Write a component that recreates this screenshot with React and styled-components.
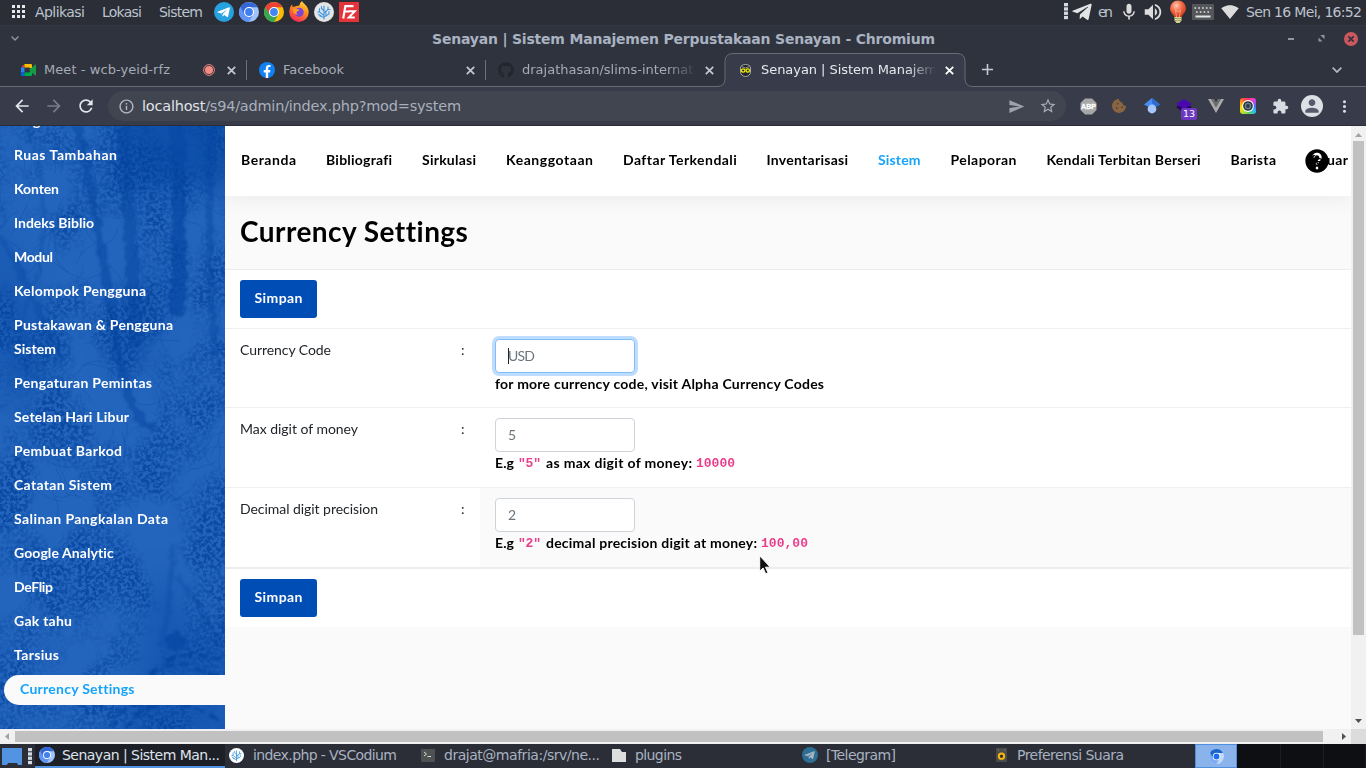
import React, { useLayoutEffect, useRef } from "react";
import styled, { createGlobalStyle, css } from "styled-components";
import {
  MdArrowBack, MdArrowForward, MdRefresh, MdInfoOutline, MdSend, MdStarBorder, MdExtension,
  MdPerson, MdMoreVert, MdMic, MdVolumeUp, MdSignalWifi4Bar, MdHelp, MdAdd,
} from "react-icons/md";
import { FaGithub, FaTelegramPlane, FaCookieBite } from "react-icons/fa";

const Global = createGlobalStyle`
  * { box-sizing: border-box; }
  body { margin: 0; overflow: hidden; background: #2b2e37; }
`;

const ui = `"DejaVu Sans", sans-serif`;
const round = `Lato, "Open Sans", sans-serif`;

/* ---------- text that fills a given width through its letter spacing ---------- */

const FitBox = styled.span`
  display: inline-block;
  flex: none;
  width: ${(p) => p.$w}px;
  margin-left: ${(p) => p.$ml || 0}px;
  white-space: nowrap;
`;

function Fit({ w, ml, children, className }) {
  const inner = useRef(null);
  useLayoutEffect(() => {
    const el = inner.current;
    el.style.letterSpacing = "0px";
    const n = el.textContent.length;
    if (n > 1) el.style.letterSpacing = `${(w - el.getBoundingClientRect().width) / (n - 1)}px`;
  }, [w, children]);
  return (
    <FitBox $w={w} $ml={ml} className={className}>
      <span ref={inner}>{children}</span>
    </FitBox>
  );
}

/* ---------- shared ---------- */

const Screen = styled.div`
  width: 1366px;
  height: 768px;
  display: flex;
  flex-direction: column;
  overflow: hidden;
  font-family: ${ui};
`;

const Slot = styled.span`
  display: flex;
  flex: none;
  align-items: center;
  justify-content: center;
  width: ${(p) => p.$w}px;
  height: 100%;
  margin-left: ${(p) => p.$ml || 0}px;
  color: ${(p) => p.$c || "#d8dbe2"};
  font-size: ${(p) => p.$s || 16}px;
  position: relative;
  svg { flex: none; display: block; }
`;

/* ---------- icons ---------- */

const Telegram = ({ size = 20, bg = "#27a2e0", fg = "#fff" }) => (
  <svg width={size} height={size} viewBox="0 0 20 20">
    <circle cx="10" cy="10" r="10" fill={bg} />
    <path d="M3.6 9.8 15 5.2c.6-.2 1 .1.9.8l-1.8 8.6c-.1.6-.6.7-1 .4l-2.8-2-1.400 1.300c-.3.3-.6.1-.7-.2l-.6-2.500-3.900-1.100c-.6-.2-.6-.5-.1-.7z" fill={fg} />
    <path d="M7.700 11.500 13 7.500 8.900 12l-.6 2.300z" fill={bg} />
  </svg>
);

const Chrome = ({ size = 20, a = "#ea4335", b = "#fbbc05", c = "#34a853", core = "#4285f4" }) => (
  <svg width={size} height={size} viewBox="0 0 20 20">
    <circle cx="10" cy="10" r="10" fill={b} />
    <path d="M1.340 5A10 10 0 0 0 10 20l4.200-7.500H6.100z" fill={c} />
    <path d="M1.340 5A10 10 0 0 1 18.660 5.300H10L5.700 12.500z" fill={a} />
    <circle cx="10" cy="10" r="5" fill="#fff" />
    <circle cx="10" cy="10" r="3.900" fill={core} />
  </svg>
);

const Chromium = ({ size }) => <Chrome size={size} a="#3367d6" b="#a1c2fa" c="#5f93f5" core="#3f7ff0" />;

const Firefox = () => (
  <svg width="20" height="21" viewBox="0 0 20 21">
    <defs>
      <linearGradient id="fx" x1="0.8" y1="0" x2="0.3" y2="1">
        <stop offset="0" stopColor="#ffe03d" />
        <stop offset="0.45" stopColor="#ff8a1f" />
        <stop offset="1" stopColor="#f5255c" />
      </linearGradient>
    </defs>
    <path d="M13 0c1 2.500 6.700 5 6.700 11.200A9.700 9.700 0 0 1 .3 11.200C.3 7.500 1.500 5 3 3.500L3.600 6 6 5.400c1-.3 3-1 4.300-.6C10.500 3 11.600 1 13 0z" fill="url(#fx)" />
    <circle cx="10.200" cy="11.200" r="4.500" fill="#7b45d8" />
    <path d="M4 7.500c2-.8 4 .5 6.500 1.200-.3 1.200-2 1-2.800 2.200-.6 1 .2 2 1.300 2.500-3 .8-5.500-2-5-5.900z" fill="#ff9b22" />
  </svg>
);

const Codium = ({ size = 20, ring = "#e3e4e6" }) => (
  <svg width={size} height={size} viewBox="0 0 20 20">
    <circle cx="10" cy="10" r="10" fill={ring} />
    <g fill="none" stroke="#3f97e0" strokeWidth="1.100" strokeLinecap="round">
      <path d="M10 17V4M10 13.500 5.500 10V6.500M10 11l4-3.500V5M10 9 7.500 6.500V4.500M10 15l5-3V9.500M5.500 10H3.800M14 7.500h2M10 15.500 6 14M12 13l-.2-3.500M7 13.800 4.500 12.500" />
    </g>
  </svg>
);

const Filezilla = () => (
  <svg width="20" height="20" viewBox="0 0 20 20">
    <rect width="20" height="20" fill="#e5333a" />
    <g fill="none" stroke="#fff">
      <path d="M4.200 16.500 6.400 4.100H14.500M5.500 9.500h5" strokeWidth="2.200" />
      <path d="M9.500 9.300h6.300l-6 6.200h6" strokeWidth="2" />
    </g>
  </svg>
);

const Grid = () => (
  <svg width="13" height="13" viewBox="0 0 13 13" fill="#e6e8ec">
    {[0, 5, 10].map((y) => [0, 5, 10].map((x) => <rect key={x + "-" + y} x={x} y={y} width="3" height="3" />))}
  </svg>
);

const Dots = () => (
  <svg width="4" height="17" viewBox="0 0 4 17" fill="#d3dae3">
    {[0, 4.300, 8.600, 12.900].map((y) => <rect key={y} y={y} width="4" height="3.300" />)}
  </svg>
);

const Bulb = () => (
  <svg width="18" height="24" viewBox="0 0 18 24">
    <defs>
      <radialGradient id="bulb" cx="0.4" cy="0.3" r="0.7">
        <stop offset="0" stopColor="#ffc9b4" />
        <stop offset="0.5" stopColor="#f26a44" />
        <stop offset="1" stopColor="#c8381b" />
      </radialGradient>
    </defs>
    <path d="M9 .5a8 8 0 0 1 8 8c0 4-4 6-4.500 9h-7C5 14.500 1 12.500 1 8.500a8 8 0 0 1 8-8z" fill="url(#bulb)" />
    <path d="M7.500 17 6.500 10l2.500 2 2.500-2-1 7" fill="none" stroke="#f9b08a" strokeWidth=".8" />
    <path d="M5.500 17h7v3.500l-2 2.500h-3l-2-2.500z" fill="#d9d79a" />
    <path d="M5.500 18.500h7M5.500 20.500h7" stroke="#8f8c58" strokeWidth=".7" />
  </svg>
);

const Keyboard = () => (
  <svg width="22" height="16" viewBox="0 0 22 16">
    <rect width="22" height="16" fill="#54565a" />
    <g stroke="#e4e5e6" strokeWidth="1.600">
      <path d="M2.500 4h17" strokeDasharray="1.600 2.200" />
      <path d="M4 8h14" strokeDasharray="1.600 2.200" />
      <path d="M3.500 12.500h15" strokeWidth="2" />
    </g>
  </svg>
);

const Meet = () => (
  <svg width="15" height="12" viewBox="0 0 15 12">
    <path d="M0 3.500 3.500 0v3.500z" fill="#ea4335" />
    <path d="M3.500 0H10a1 1 0 0 1 1 1v4L8 3.500H3.500z" fill="#fbbc04" />
    <path d="M0 3.500h3.500v5H0z" fill="#2684fc" />
    <path d="M0 8.500h3.500V12H1a1 1 0 0 1-1-1z" fill="#0066da" />
    <path d="M3.500 8.500H8L11 6v5a1 1 0 0 1-1 1H3.500z" fill="#00ac47" />
    <path d="M8 6 14 .8c.5-.4 1-.1 1 .5v9.400c0 .6-.5.9-1 .5z" fill="#189a45" />
  </svg>
);

const Recording = () => (
  <svg width="12" height="12" viewBox="0 0 12 12">
    <circle cx="6" cy="6" r="5.400" fill="none" stroke="#ee837c" strokeWidth="1" />
    <circle cx="6" cy="6" r="4" fill="#f28b82" />
  </svg>
);

const Cross = () => (
  <svg width="9" height="9" viewBox="0 0 9 9">
    <path d="M.8.8l7.400 7.400M8.200.8.8 8.200" stroke="currentColor" strokeWidth="1.800" />
  </svg>
);

const Chevron = ({ size }) => (
  <svg width={size} height={size * 0.6} viewBox="0 0 10 6">
    <path d="M.7.7 5 5 9.300.7" fill="none" stroke="currentColor" strokeWidth="1.700" />
  </svg>
);

const Facebook = () => (
  <svg width="16" height="16" viewBox="0 0 16 16">
    <circle cx="8" cy="8" r="8" fill="#1080f5" />
    <path d="M6.800 16v-5.600H4.700V8h2.100V6.300c0-2.100 1.200-3.300 3.100-3.300.8 0 1.600.1 1.600.1v2h-1c-1 0-1.300.6-1.300 1.300V8h2.200l-.4 2.400H9.200V16z" fill="#fff" />
  </svg>
);

const SenayanMark = () => (
  <svg width="13" height="13" viewBox="0 0 13 13">
    <path d="M1.500 4C1.500 1.500 4 .5 6.500 .5s5 1 5 3.500v4c0 2.500-2.500 4.500-5 4.500s-5-2-5-4.500z" fill="#23262a" stroke="#a6a9a6" />
    <path d="M2.500 2.500 6.500 4l4-1.500" fill="none" stroke="#8f9290" />
    <circle cx="4.200" cy="6.500" r="1.700" fill="none" stroke="#f4ec00" strokeWidth="1.300" />
    <circle cx="8.800" cy="6.500" r="1.700" fill="none" stroke="#f4ec00" strokeWidth="1.300" />
  </svg>
);

const Abp = () => (
  <svg width="17" height="17" viewBox="0 0 17 17">
    <path d="M5 .5h7L16.500 5v7L12 16.500H5L.5 12V5z" fill="#a7a7a7" />
    <text x="8.500" y="11.300" textAnchor="middle" fontFamily="Liberation Sans, sans-serif" fontWeight="700" fontSize="8" fill="#fff" stroke="#fff" strokeWidth=".3" textLength="15" lengthAdjust="spacingAndGlyphs">ABP</text>
  </svg>
);

const Scholar = () => (
  <svg width="16" height="16" viewBox="0 0 16 16">
    <path d="M8 0 0 6.500 4.500 9h7L16 6.500z" fill="#4a8af4" />
    <path d="M8 0l8 6.500L12 9 8 5z" fill="#2f6bd0" />
    <circle cx="8" cy="11" r="4.400" fill="#a6c6fa" />
  </svg>
);

const PurpleBox = () => (
  <svg width="16" height="14" viewBox="0 0 16 14">
    <path d="M0 8l8-4 8 4-8 6z" fill="#26065f" />
    <path d="M8 0l8 5-8 5-8-5z" fill="#4a08b0" />
  </svg>
);

const Vue = () => (
  <svg width="16" height="14" viewBox="0 0 16 14">
    <path d="M0 0h3.200L8 8.300 12.800 0H16L8 14z" fill="#a9aaa9" />
    <path d="M3.200 0H6l2 3.500L10 0h2.800L8 8.300z" fill="#6d6f72" />
  </svg>
);

const Rainbow = styled.span`
  display: flex;
  align-items: center;
  justify-content: center;
  width: 16px;
  height: 16px;
  border-radius: 3px;
  background: conic-gradient(#ff2f6b, #ff3fae 8%, #e63bdc 12%, #4a6bff 25%, #25c4ef 36%, #58d35a 48%, #b5e02c 60%, #ffe000 70%, #ffb300 80%, #ff5a3c 90%, #ff2f6b);
`;

const Camera = () => (
  <Rainbow>
    <svg width="12" height="12" viewBox="0 0 12 12">
      <circle cx="6" cy="6" r="5.900" fill="#fff" />
      <circle cx="6" cy="6" r="4.100" fill="#69808d" stroke="#29343b" strokeWidth="1.500" />
      <circle cx="6" cy="6" r="1.900" fill="#2c3b45" />
    </svg>
  </Rainbow>
);

const CloseRed = () => (
  <svg width="14" height="14" viewBox="0 0 14 14">
    <circle cx="7" cy="7" r="7" fill="#cc575d" />
    <path d="M4.300 4.300 9.700 9.700M9.700 4.300 4.300 9.700" stroke="#2f333d" strokeWidth="1.700" />
  </svg>
);

const Restore = () => (
  <svg width="7" height="7" viewBox="0 0 7 7" fill="#90959f">
    <path d="M2.300 0H6.500v4.200zM.5 2.500v4h4z" />
  </svg>
);

const Terminal = () => (
  <svg width="14" height="13" viewBox="0 0 14 13">
    <rect width="14" height="13" rx="1" fill="#505153" />
    <path d="M3 3l2.500 2L3 7M6.500 7.500H10" fill="none" stroke="#dadada" />
  </svg>
);

const Folder = () => (
  <svg width="14" height="13" viewBox="0 0 14 13">
    <path d="M0 0h8l2 3h4v10H0z" fill="#dedede" />
  </svg>
);

const Speaker = () => (
  <svg width="11" height="14" viewBox="0 0 11 14">
    <rect width="11" height="14" rx="1" fill="#4b4b4b" />
    <circle cx="2.500" cy="2" r=".7" fill="#777" /><circle cx="8.500" cy="2" r=".7" fill="#777" />
    <circle cx="5.500" cy="8.200" r="2.700" fill="#333" stroke="#fcb90d" strokeWidth="1.900" />
  </svg>
);

const Desktop = () => (
  <svg width="20" height="17" viewBox="0 0 20 17">
    <path d="M0 0h20v17h-4l-1-2H6l-1 2H0z" fill="#5294e2" />
  </svg>
);

const Pointer = styled.svg`
  position: absolute;
  left: 534px;
  top: 429px;
`;

/* ---------- desktop panel ---------- */

const Panel = styled.div`
  flex: none;
  display: flex;
  align-items: center;
  height: 26px;
  padding-bottom: 2px;
  background: #2b2e37;
  border-bottom: 1px solid #353842;
  color: #bcc3ce;
  font-size: 14px;
`;

const Spring = styled.span`flex: 1;`;

const TitleBar = styled.div`
  flex: none;
  display: flex;
  align-items: center;
  height: 27px;
  padding-bottom: 2px;
  background: #2f333d;
  color: #a9b2c1;
  font-size: 14px;
  font-weight: 700;
`;

const Minimize = styled.span`
  width: 6px;
  height: 2px;
  background: #90959f;
`;

/* ---------- browser chrome ---------- */

const TabStrip = styled.div`
  flex: none;
  display: flex;
  height: 34px;
  padding-left: 8px;
  background: #2f333d;
  border-bottom: 1px solid #686b76;
`;

const TabBox = styled.div`
  position: relative;
  display: flex;
  align-items: center;
  width: ${(p) => (p.$active ? 240 : 239)}px;
  height: 34px;
  padding-left: 11px;
  color: ${(p) => (p.$active ? "#e6e8ed" : "#a5abb7")};
  font-size: 13px;
  ${(p) => p.$divider && css`
    &::after { content: ""; position: absolute; right: 0; top: 7px; width: 1px; height: 20px; background: #6d707b; }
  `}
`;

const TabText = styled.span`
  flex: 1;
  min-width: 0;
  margin-left: 7px;
  margin-right: -2px;
  padding-bottom: 2px;
  position: relative;
  z-index: 1;
  overflow: hidden;
  white-space: nowrap;
  ${(p) => p.$fade && css`mask-image: linear-gradient(90deg, #000 84%, transparent 101%);`}
`;

const TabShape = styled.svg`
  position: absolute;
  left: -8px;
  top: 0;
`;

const Toolbar = styled.div`
  flex: none;
  display: flex;
  align-items: center;
  height: 39px;
  padding: 0 6px;
  background: #383b49;
  border-bottom: 1px solid #2b2c37;
`;

const Omnibox = styled.div`
  display: flex;
  align-items: center;
  width: 958px;
  height: 30px;
  margin: 0 6px;
  padding: 0 2px 0 9px;
  border-radius: 15px;
  background: #404550;
  color: #a9b0bc;
  font-size: 14.500px;
`;

const Host = styled.span`color: #e0e3e8;`;

const Count = styled.span`
  position: absolute;
  left: 13px;
  top: 9px;
  width: 16px;
  height: 12px;
  border-radius: 2px;
  background: #6d37c0;
  color: #fff;
  font: 9.500px/12px ${ui};
  text-align: center;
`;

const Badged = styled.span`
  position: relative;
  display: flex;
  justify-content: center;
  width: 32px;
`;

const Avatar = styled.span`
  display: flex;
  align-items: center;
  justify-content: center;
  width: 22px;
  height: 22px;
  border-radius: 50%;
  background: #dde0e6;
  color: #545c6c;
`;

/* ---------- page ---------- */

const Viewport = styled.div`
  flex: none;
  display: grid;
  grid-template: 603px 15px / 1351px 15px;
  height: 618px;
`;

const Page = styled.div`
  display: flex;
  overflow: hidden;
  background: #fafafa;
  font-family: ${round};
  font-size: 13px;
`;

const Sidebar = styled.aside`
  position: relative;
  flex: none;
  width: 225px;
  height: 603px;
  overflow: hidden;
  background: #2364bc;
`;

const Backdrop = styled.svg`
  position: absolute;
  inset: 0;
`;

const Menu = styled.nav`
  position: relative;
  margin-top: -22px;
  color: #fff;
  font-weight: 700;
  font-size: 14px;
`;

const MenuItem = styled.div`
  padding: 5px 14px;
  line-height: 24px;
  ${(p) => p.$active && css`
    margin: 3px 0 0 4px;
    padding: 2px 16px 4px;
    border-radius: 15px 0 0 15px;
    background: #fafafa;
    color: #14a4fa;
  `}
`;

const Main = styled.main`
  position: relative;
  width: 1126px;
`;

const TopNav = styled.nav`
  position: relative;
  z-index: 1;
  display: flex;
  align-items: center;
  gap: 30px;
  height: 70px;
  padding: 0 0 4px 16px;
  background: #fff;
  box-shadow: 0 2px 22px rgba(0, 0, 0, 0.07);
  color: #000;
  font-weight: 700;
  font-size: 14px;
`;

const NavText = styled(Fit)`
  position: relative;
  z-index: 1;
  color: ${(p) => (p.$active ? "#14a4fa" : "#000")};
`;

const Help = styled.span`
  position: absolute;
  left: 1078px;
  top: 21px;
  font-size: 28px;
  line-height: 0;
`;

const Heading = styled.h1`
  height: 73px;
  margin: 0;
  padding-left: 15px;
  font-size: 28px;
  line-height: 70px;
  color: #000;
`;

const ButtonRow = styled.div`
  padding: 10px 15px;
  height: ${(p) => p.$h}px;
  background: #fff;
  border-top: ${(p) => p.$line}px solid #eceded;
`;

const Button = styled.button`
  display: block;
  width: 77px;
  height: 38px;
  padding: 0 0 3px;
  border: 0;
  border-radius: 3px;
  background: #004db6;
  color: #fff;
  font: 700 14px ${round};
`;

const Row = styled.div`
  display: grid;
  grid-template-columns: 221px 34px 1fr;
  height: ${(p) => p.$h}px;
  border-top: 1px solid #eeefef;
  background: #fff;
  color: #212529;
  font-size: 14px;
`;

const Cell = styled.div`
  padding: 10px 15px;
  line-height: 21px;
  background: ${(p) => (p.$tint ? "#fafafa" : "transparent")};
`;

const Field = styled.div`
  display: flex;
  align-items: center;
  width: 140px;
  height: 34px;
  padding-left: 12px;
  padding-bottom: 1px;
  border: 1px solid ${(p) => (p.$focus ? "#80bdff" : "#ced4da")};
  border-radius: 4px;
  background: #fff;
  color: #6c757d;
  box-shadow: ${(p) => (p.$focus ? "0 0 0 3px #bfdeff" : "none")};
`;

const Caret = styled.span`
  width: 1px;
  height: 16px;
  margin-right: -1px;
  background: #222;
`;

const Hint = styled.div`
  display: flex;
  height: 23px;
  font-weight: 700;
  color: #000;
  line-height: 21px;
`;

const Code = styled(Fit)`
  font-family: "Liberation Mono", monospace;
  font-size: 13px;
  line-height: 24px;
  color: #e83e8c;
`;

/* ---------- scroll bars ---------- */

const VBar = styled.div`
  display: flex;
  flex-direction: column;
  align-items: center;
  justify-content: space-between;
  padding: 6px 0 5px;
  background: #f1f1f1;
`;

const VThumb = styled.div`
  width: 11px;
  height: 494px;
  margin: 4px 0 auto;
  background: #c1c1c1;
`;

const HBar = styled.div`
  display: flex;
  align-items: center;
  padding: 0 5px;
  background: #f1f1f1;
`;

const HThumb = styled.div`
  width: 1308px;
  height: 11px;
  margin: 0 auto 0 5px;
  background: #c1c1c1;
`;

const Corner = styled.div`background: #dcdcdc;`;

/* ---------- task bar ---------- */

const Taskbar = styled.div`
  flex: none;
  display: flex;
  align-items: center;
  height: 24px;
  background: #2b2e37;
  color: #a9b2c1;
  font-size: 14px;
`;

const Task = styled.div`
  display: flex;
  align-items: center;
  width: ${(p) => p.$w}px;
  height: 24px;
  padding: 0 0 2px 4px;
  ${(p) => p.$active && css`
    background: #1d2027;
    color: #dfe3ea;
    box-shadow: inset 0 -2px #5294e2;
  `}
`;

const Pager = styled.div`
  display: flex;
  align-items: center;
  justify-content: center;
  width: ${(p) => p.$w}px;
  height: 24px;
  background: ${(p) => (p.$on ? "#8ab3ec" : "#0e0f12")};
  border: solid ${(p) => (p.$on ? "#4f8fdc" : "#1b1d22")};
  border-width: ${(p) => (p.$on ? "1px" : "0 1px 0 0")};
`;

/* ---------- sidebar forest ---------- */

function rng(seed) {
  let s = seed;
  return () => {
    s = (s * 16807) % 2147483647;
    return s / 2147483647;
  };
}

function twigs() {
  const r = rng(77);
  const out = [];
  for (let i = 0; i < 190; i++) {
    let x = r() * 225;
    let y = r() * 380;
    let a = r() * Math.PI * 2;
    let d = `M${x.toFixed(1)} ${y.toFixed(1)}`;
    for (let k = 0; k < 5; k++) {
      a += (r() - 0.5) * 1.1;
      x += Math.cos(a) * 7;
      y += Math.sin(a) * 7;
      d += `L${x.toFixed(1)} ${y.toFixed(1)}`;
    }
    out.push(d);
  }
  return out.join("");
}

const Forest = () => (
  <Backdrop width="225" height="603" viewBox="0 0 225 603" colorInterpolationFilters="sRGB">
    <defs>
      <filter id="leaf" x="0" y="0" width="1" height="1">
        <feTurbulence type="fractalNoise" baseFrequency="0.28" numOctaves="3" seed="8" result="f" />
        <feColorMatrix in="f" values="0 0 0 0 .012  0 0 0 0 .26  0 0 0 0 .61  5 0 0 0 -2" result="fine" />
        <feTurbulence type="fractalNoise" baseFrequency="0.016 0.012" numOctaves="4" seed="21" result="l" />
        <feColorMatrix in="l" values="0 0 0 0 0  0 0 0 0 0  0 0 0 0 0  0 4 0 0 -1.600" result="large" />
        <feComposite in="fine" in2="large" operator="in" />
      </filter>
      <filter id="rough" x="0" y="0" width="225" height="603" filterUnits="userSpaceOnUse">
        <feTurbulence type="fractalNoise" baseFrequency="0.12" numOctaves="2" seed="3" result="n" />
        <feDisplacementMap in="SourceGraphic" in2="n" scale="9" xChannelSelector="R" yChannelSelector="G" />
        <feGaussianBlur stdDeviation="1" />
      </filter>
      <filter id="haze"><feGaussianBlur stdDeviation="12" /></filter>
    </defs>
    <g filter="url(#haze)" fill="#0548a4">
      <rect x="120" y="-20" width="110" height="80" opacity=".7" />
      <path d="M-10 90 60 210 20 290-20 220z" opacity=".35" />
      <path d="M120 160h40l-10 80h-40z" opacity=".35" />
      <path d="M160 440l30 60 40 10v110H120z" opacity=".4" />
    </g>
    <g filter="url(#rough)" fill="none" stroke="#0849a5">
      <path d="M176-10Q182 120 176 190" strokeWidth="14" opacity=".75" />
      <path d="M76-10Q97 90 114 200T155 300" strokeWidth="8" opacity=".6" />
      <path d="M122-10Q130 90 136 220" strokeWidth="12" opacity=".6" />
      <path d="M25-10Q60 90 30 170T70 270" strokeWidth="4" opacity=".3" />
      <path d="M0 110Q25 150 62 240" strokeWidth="7" opacity=".4" />
      <path d="M212-10Q205 110 216 230" strokeWidth="7" opacity=".5" />
      <path d="M172 420Q172 480 160 520M176 450q20 20 45 70" strokeWidth="5" opacity=".35" />
    </g>
    <path d={twigs()} fill="none" stroke="#0849a5" strokeWidth=".7" opacity=".4" />
    <rect width="225" height="603" filter="url(#leaf)" opacity=".75" />
    <g filter="url(#rough)">
      <ellipse cx="175" cy="516" rx="10" ry="9" fill="#0548a4" opacity=".8" />
      <path d="M125 603q30-40 70-20t30 10M135 575q30-30 60-12t35 8M150 550q20-20 45-8t30 8M165 535q22-12 60 0M110 603q14-34 40-20" strokeDasharray="11 5" fill="none" stroke="#03459f" strokeWidth="4" opacity=".8" />
    </g>
  </Backdrop>
);

/* ---------- app ---------- */

const menu = [
  ["Plugin", 37], ["Ruas Tambahan", 103], ["Konten", 45], ["Indeks Biblio", 80], ["Modul", 39],
  ["Kelompok Pengguna", 132], ["Pustakawan & Pengguna", 159, "Sistem", 42], ["Pengaturan Pemintas", 138],
  ["Setelan Hari Libur", 115], ["Pembuat Barkod", 108], ["Catatan Sistem", 98],
  ["Salinan Pangkalan Data", 154], ["Google Analytic", 100], ["DeFlip", 39], ["Gak tahu", 58],
  ["Tarsius", 45], ["Currency Settings", 114],
];

const nav = [
  ["Beranda", 55], ["Bibliografi", 66], ["Sirkulasi", 54], ["Keanggotaan", 87], ["Daftar Terkendali", 113.500],
  ["Inventarisasi", 81.500], ["Sistem", 42.500], ["Pelaporan", 66], ["Kendali Terbitan Berseri", 154],
  ["Barista", 45.500], ["Keluar", 42],
];

const Tab = ({ icon, text, w, active, divider, fade, recording }) => (
  <TabBox $active={active} $divider={divider}>
    {active && (
      <TabShape width="257" height="34" viewBox="0 0 257 34">
        <path d="M0 33.500q8 0 8-8V8.500Q8 .5 16 .5h224q8 0 8 8v17q0 8 8 8V34H0z" fill="#383b49" />
        <path d="M0 33.500q8 0 8-8V8.500Q8 .5 16 .5h224q8 0 8 8v17q0 8 8 8" fill="none" stroke="#686b76" />
      </TabShape>
    )}
    <Slot $w={18}>{icon}</Slot>
    <TabText $fade={fade}><Fit w={w}>{text}</Fit></TabText>
    {recording && <Slot $w={13}><Recording /></Slot>}
    <Slot $w={32} $c={active ? "#fff" : "#c0c5cf"}><Cross /></Slot>
  </TabBox>
);

const Triangle = ({ d, c, w = 7, h = 7 }) => (
  <svg width={w} height={h} viewBox={`0 0 ${w} ${h}`}><path d={d} fill={c} /></svg>
);

const SettingRow = ({ h, label, lw, value, vw, focus, tint, children }) => (
  <Row $h={h}>
    <Cell><Fit w={lw}>{label}</Fit></Cell>
    <Cell>:</Cell>
    <Cell $tint={tint}>
      <Field $focus={focus}>{focus && <Caret />}<Fit w={vw}>{value}</Fit></Field>
      <Hint>{children}</Hint>
    </Cell>
  </Row>
);

export default function App() {
  return (
    <Screen>
      <Global />
      <Panel>
        <Slot $w={13} $ml={12}><Grid /></Slot>
        <Fit w={50} ml={10}>Aplikasi</Fit>
        <Fit w={40} ml={17}>Lokasi</Fit>
        <Fit w={44} ml={17}>Sistem</Fit>
        <Slot $w={25} $ml={8}><Telegram /></Slot>
        <Slot $w={25}><Chromium /></Slot>
        <Slot $w={25}><Chrome /></Slot>
        <Slot $w={25}><Firefox /></Slot>
        <Slot $w={25}><Codium /></Slot>
        <Slot $w={25}><Filezilla /></Slot>
        <Spring />
        <Slot $w={5}><Dots /></Slot>
        <Slot $w={22} $ml={3} $s={22} $c="#e2e3e5"><FaTelegramPlane /></Slot>
        <Fit w={15} ml={5}>en</Fit>
        <Slot $w={22} $ml={5} $s={20} $c="#dcdcdc"><MdMic /></Slot>
        <Slot $w={22} $ml={2} $s={22} $c="#dcdcdc"><MdVolumeUp /></Slot>
        <Slot $w={22} $ml={3}><Bulb /></Slot>
        <Slot $w={24} $ml={2}><Keyboard /></Slot>
        <Slot $w={22} $ml={4} $s={18} $c="#dcdcdc"><MdSignalWifi4Bar /></Slot>
        <Fit w={116} ml={5}>Sen 16 Mei, 16:52</Fit>
        <Slot $w={4} />
      </Panel>

      <TitleBar>
        <Slot $w={10} $ml={10} $c="#90959f"><Chevron size={8} /></Slot>
        <Fit w={503} ml={412}>Senayan | Sistem Manajemen Perpustakaan Senayan - Chromium</Fit>
        <Spring />
        <Slot $w={30}><Minimize /></Slot>
        <Slot $w={30}><Restore /></Slot>
        <Slot $w={30}><CloseRed /></Slot>
      </TitleBar>

      <TabStrip>
        <Tab icon={<Meet />} text="Meet - wcb-yeid-rfz" w={126} divider recording />
        <Tab icon={<Facebook />} text="Facebook" w={61} divider />
        <Tab icon={<Slot $w={18} $c="#23272d"><FaGithub /></Slot>} text="drajathasan/slims-internati" w={175} fade />
        <Tab icon={<SenayanMark />} text="Senayan | Sistem Manajem" w={176} active fade />
        <Slot $w={44} $s={19} $c="#c5cad4"><MdAdd /></Slot>
        <Spring />
        <Slot $w={58} $c="#b4bac6"><Chevron size={10} /></Slot>
      </TabStrip>

      <Toolbar>
        <Slot $w={32} $s={20} $c="#e3e6ec"><MdArrowBack /></Slot>
        <Slot $w={32} $s={20} $c="#797c88"><MdArrowForward /></Slot>
        <Slot $w={32} $s={20} $c="#e3e6ec"><MdRefresh /></Slot>
        <Omnibox>
          <Slot $w={18} $s={17} $c="#b4b8c1"><MdInfoOutline /></Slot>
          <Fit w={319} ml={7}><Host>localhost</Host>/s94/admin/index.php?mod=system</Fit>
          <Spring />
          <Slot $w={32} $s={17} $c="#9da2ac"><MdSend /></Slot>
          <Slot $w={32} $s={18} $c="#a7acb6"><MdStarBorder /></Slot>
        </Omnibox>
        <Slot $w={24} $ml={4}><Abp /></Slot>
        <Slot $w={32} $ml={3} $s={14} $c="#8a6440"><FaCookieBite /></Slot>
        <Slot $w={32} $ml={1}><Scholar /></Slot>
        <Slot $w={32}><Badged><PurpleBox /><Count>13</Count></Badged></Slot>
        <Slot $w={32}><Vue /></Slot>
        <Slot $w={32}><Camera /></Slot>
        <Slot $w={32} $s={17}><MdExtension /></Slot>
        <Slot $w={32} $s={20}><Avatar><MdPerson /></Avatar></Slot>
        <Slot $w={32} $s={19}><MdMoreVert /></Slot>
      </Toolbar>

      <Viewport>
        <Page>
          <Sidebar>
            <Forest />
            <Menu>
              {menu.map(([t, w, t2, w2]) => (
                <MenuItem key={t} $active={t === "Currency Settings"}>
                  <Fit w={w}>{t}</Fit>
                  {t2 && <Fit w={w2}>{t2}</Fit>}
                </MenuItem>
              ))}
            </Menu>
          </Sidebar>
          <Main>
            <TopNav>
              {nav.map(([t, w]) => (
                <NavText key={t} w={w} $active={t === "Sistem"}>{t}</NavText>
              ))}
              <Help><MdHelp /></Help>
            </TopNav>
            <Heading><Fit w={227}>Currency Settings</Fit></Heading>
            <ButtonRow $h={59} $line={1}><Button><Fit w={48}>Simpan</Fit></Button></ButtonRow>
            <SettingRow h={79} label="Currency Code" lw={91} value="USD" vw={27} focus>
              <Fit w={329}>for more currency code, visit Alpha Currency Codes</Fit>
            </SettingRow>
            <SettingRow h={80} label="Max digit of money" lw={118} value="5" vw={8}>
              <Fit w={19}>E.g</Fit>
              <Code w={23} ml={4}>"5"</Code>
              <Fit w={146} ml={5}>as max digit of money:</Fit>
              <Code w={39} ml={4}>10000</Code>
            </SettingRow>
            <SettingRow h={80} label="Decimal digit precision" lw={138} value="2" vw={8} tint>
              <Fit w={19}>E.g</Fit>
              <Code w={23} ml={4}>"2"</Code>
              <Fit w={211} ml={5}>decimal precision digit at money:</Fit>
              <Code w={47} ml={4}>100,00</Code>
            </SettingRow>
            <ButtonRow $h={60} $line={2}><Button><Fit w={48}>Simpan</Fit></Button></ButtonRow>
            <Pointer width="12" height="20" viewBox="0 0 12 20">
              <path d="M.7.700v15.500l3.400-3.200 2.600 5.800 2.300-1-2.500-5.600h4.700z" fill="#111" stroke="#fff" />
            </Pointer>
          </Main>
        </Page>
        <VBar>
          <Triangle d="M0 5 3.500 1 7 5z" c="#a3a3a3" h={5} />
          <VThumb />
          <Triangle d="M0 0h7L3.500 4z" c="#505050" h={5} />
        </VBar>
        <HBar>
          <Triangle d="M4 0v7L0 3.500z" c="#a3a3a3" w={5} />
          <HThumb />
          <Triangle d="M1 0v7l4-3.500z" c="#505050" w={5} />
        </HBar>
        <Corner />
      </Viewport>

      <Taskbar>
        <Slot $w={24}><Desktop /></Slot>
        <Slot $w={10} $ml={1}><Dots /></Slot>
        <Task $w={190} $active><Chromium size={16} /><Fit w={158} ml={7}>Senayan | Sistem Man...</Fit></Task>
        <Task $w={191}><Codium size={15} ring="#fff" /><Fit w={144} ml={9}>index.php - VSCodium</Fit></Task>
        <Task $w={191}><Slot $w={16}><Terminal /></Slot><Fit w={156} ml={8}>drajat@mafria:/srv/ne...</Fit></Task>
        <Task $w={191}><Slot $w={16}><Folder /></Slot><Fit w={47} ml={8}>plugins</Fit></Task>
        <Task $w={191}><Telegram size={16} bg="#2c6e94" fg="#a4b4bf" /><Fit w={70} ml={8}>[Telegram]</Fit></Task>
        <Task $w={206}><Slot $w={11} $ml={3}><Speaker /></Slot><Fit w={107} ml={10}>Preferensi Suara</Fit></Task>
        <Pager $w={42} $on><Chrome size={15} a="#1b66c9" b="#c3dafb" c="#7fabf5" core="#1a6cf0" /></Pager>
        <Pager $w={44} />
        <Pager $w={43} />
        <Pager $w={42} />
      </Taskbar>
    </Screen>
  );
}
